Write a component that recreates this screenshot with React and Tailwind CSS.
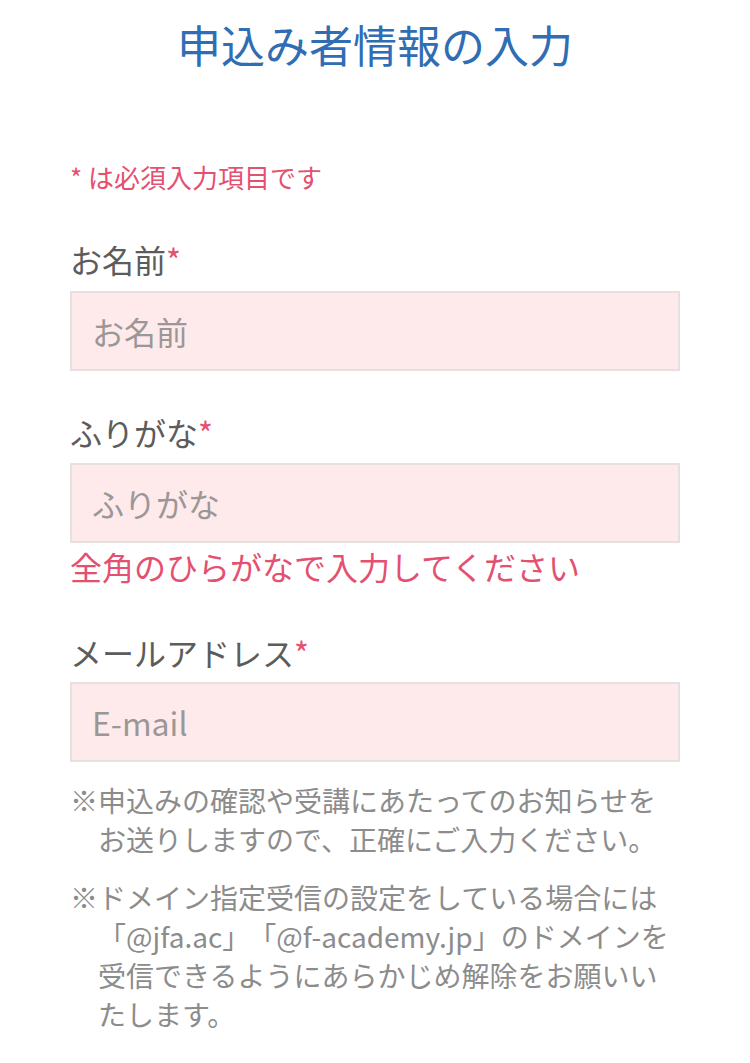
import React from "react";

const font = { fontFamily: '"Noto Sans CJK JP", "Noto Sans", sans-serif' };

function Field({ label, placeholder, mt, boxMt }) {
  return (
    <>
      <div className={`${mt} text-[32px] leading-[48px] text-[#5c5c5c]`}>
        {label}
        <span className="text-[#e4506f]">*</span>
      </div>
      <input
        readOnly
        placeholder={placeholder}
        className={`${boxMt} block w-full h-[80px] border-2 border-[#e6e0e0] bg-[#ffeaeb] pl-[20px] text-[32px] text-[#555] placeholder:text-[#9b9797] outline-none`}
        style={font}
      />
    </>
  );
}

export default function App() {
  return (
    <div className="w-[750px] min-h-[1063px] bg-white px-[70px] pb-10" style={font}>
      <h1 className="pt-[12px] text-center text-[44px] leading-[64px] font-normal text-[#2f6db4]">
        申込み者情報の入力
      </h1>
      <p className="mt-[81px] text-[26px] leading-[40px] text-[#e4506f]">* は必須入力項目です</p>

      <Field label="お名前" placeholder="お名前" mt="mt-[38px]" boxMt="mt-[8px]" />
      <Field label="ふりがな" placeholder="ふりがな" mt="mt-[37px]" boxMt="mt-[7px]" />
      <div className="text-[32px] leading-[48px] text-[#e4506f] -mt-[1px]">全角のひらがなで入力してください</div>
      <Field label="メールアドレス" placeholder="E-mail" mt="mt-[38px]" boxMt="mt-[6px]" />

      <div className="mt-[19px] flex text-[28px] leading-[39px] text-[#8c8c8c]">
        <span className="shrink-0">※</span>
        <span>
          申込みの確認や受講にあたってのお知らせを
          <br />
          お送りしますので、正確にご入力ください。
        </span>
      </div>
      <div className="mt-[19px] flex text-[28px] leading-[39px] text-[#8c8c8c]">
        <span className="shrink-0">※</span>
        <span>
          ドメイン指定受信の設定をしている場合には
          <br />
          「@jfa.ac」<span className="ml-[12px]">「@f-academy.jp」のドメインを</span>
          <br />
          受信できるようにあらかじめ解除をお願いい
          <br />
          たします。
        </span>
      </div>
    </div>
  );
}
